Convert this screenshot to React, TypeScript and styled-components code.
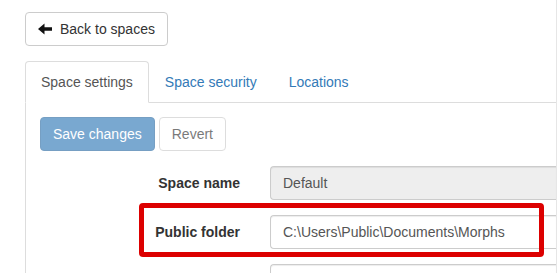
import React from "react"
import styled, { createGlobalStyle } from "styled-components"

const GlobalStyle = createGlobalStyle`
  html, body {
    margin: 0;
    padding: 0;
    background: #fff;
  }
  body {
    font-family: "Liberation Sans", Arial, sans-serif;
    font-size: 14px;
    line-height: 20px;
    color: #333;
    overflow: hidden;
  }
  * {
    box-sizing: border-box;
  }
`

const Page = styled.div`
  width: 557px;
  height: 273px;
  padding: 12px 0 0 25px;
  border-right: 1px solid #e6e6e6;
  overflow: hidden;
`

const Button = styled.button<{ $primary?: boolean }>`
  display: inline-flex;
  align-items: center;
  gap: 8px;
  height: 34px;
  padding: 6px 12px;
  font-family: inherit;
  font-size: 14px;
  line-height: 20px;
  border-radius: 4px;
  border: 1px solid ${({ $primary }) => ($primary ? "#2e6da4" : "#ccc")};
  background: ${({ $primary }) => ($primary ? "#337ab7" : "#fff")};
  color: ${({ $primary }) => ($primary ? "#fff" : "#333")};
  &:disabled {
    opacity: 0.65;
  }
`

const Tabs = styled.ul`
  display: flex;
  margin: 15px 0 0;
  padding: 0;
  list-style: none;
  border-bottom: 1px solid #ddd;
`

const Tab = styled.li<{ $active?: boolean }>`
  margin: 0 0 -1px 0;
  padding: 10px 15px;
  line-height: 20px;
  border: 1px solid ${({ $active }) => ($active ? "#ddd" : "transparent")};
  border-bottom-color: ${({ $active }) => ($active ? "#fff" : "transparent")};
  border-radius: 4px 4px 0 0;
  background: ${({ $active }) => ($active ? "#fff" : "transparent")};
  color: ${({ $active }) => ($active ? "#555" : "#337ab7")};
`

const TabContent = styled.div`
  border-left: 1px solid #ddd;
  padding: 14px 0 0 14px;
  height: 200px;
`

const Toolbar = styled.div`
  display: flex;
  gap: 4px;
  margin-bottom: 15px;
`

const FormRow = styled.div`
  position: relative;
  display: flex;
  align-items: flex-start;
  margin-bottom: 15px;
`

const Label = styled.label`
  width: 200px;
  margin-right: 30px;
  padding-top: 7px;
  text-align: right;
  font-weight: bold;
  color: #333;
`

const Input = styled.input`
  flex: 1;
  height: 34px;
  padding: 6px 12px;
  font-family: inherit;
  font-size: 14px;
  color: #555;
  border: 1px solid #ccc;
  border-right: none;
  border-radius: 4px 0 0 4px;
  background: ${({ readOnly }) => (readOnly ? "#eee" : "#fff")};
  box-shadow: inset 0 1px 1px rgba(0, 0, 0, 0.075);
  outline: none;
`

const Highlight = styled.div`
  position: absolute;
  left: 99px;
  top: -12px;
  width: 405px;
  height: 54px;
  border: 5px solid #dc0000;
  border-radius: 4px;
  pointer-events: none;
`

const ArrowLeft = () => (
  <svg width="14" height="12" viewBox="0 0 14 12">
    <path d="M0 6 L6.5 0.5 V4.2 H14 V7.8 H6.5 V11.5 Z" fill="#111" />
  </svg>
)

export default function App() {
  return (
    <>
      <GlobalStyle />
      <Page>
        <Button>
          <ArrowLeft />
          Back to spaces
        </Button>
        <Tabs>
          <Tab $active>Space settings</Tab>
          <Tab>Space security</Tab>
          <Tab>Locations</Tab>
        </Tabs>
        <TabContent>
          <Toolbar>
            <Button $primary disabled>
              Save changes
            </Button>
            <Button disabled>Revert</Button>
          </Toolbar>
          <FormRow>
            <Label>Space name</Label>
            <Input readOnly value="Default" />
          </FormRow>
          <FormRow>
            <Label>Public folder</Label>
            <Input defaultValue="C:\Users\Public\Documents\Morphs" />
            <Highlight />
          </FormRow>
          <FormRow>
            <Label></Label>
            <Input defaultValue="" />
          </FormRow>
        </TabContent>
      </Page>
    </>
  )
}
